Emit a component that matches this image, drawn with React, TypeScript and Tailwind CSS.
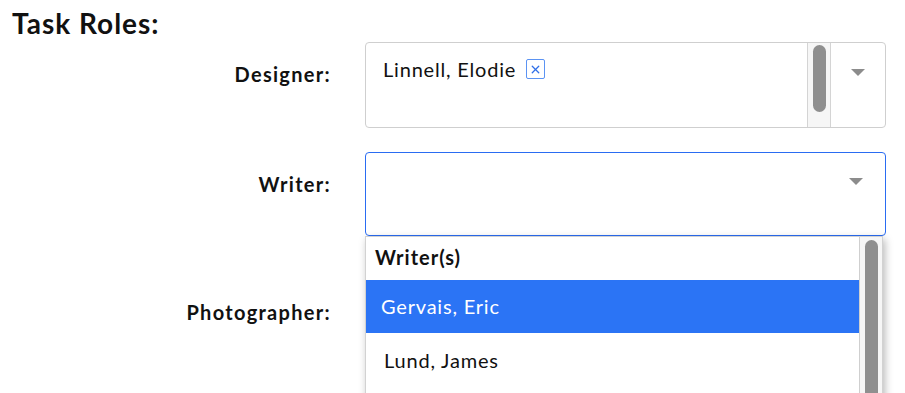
import { X } from "lucide-react";

const Caret = () => (
    <svg width="14" height="8" viewBox="0 0 14 8" className="block">
        <path d="M0 0 L14 0 L7 7 Z" fill="#8c8c8c" />
    </svg>
);

const App = () => {
    return (
        <div className="relative h-[393px] w-[905px] overflow-hidden bg-white font-['Lato',sans-serif] text-[#111]">
            <h1 className="pl-[12px] pt-[6px] text-[28px] leading-[34px] font-bold tracking-[1px]">Task Roles:</h1>

            <div className="mt-[2px] flex flex-col">
                {/* Designer */}
                <div className="flex">
                    <div className="w-[331px] pt-[19px] text-right text-[20px] leading-[26px] font-bold tracking-[1.3px]">Designer:</div>
                    <div className="ml-[34px] flex h-[86px] w-[521px] rounded-[4px] border border-[#cfcfcf]">
                        <div className="flex flex-1 items-start px-[17px] pt-[13px]">
                            <span className="text-[20px] leading-[26px] tracking-[0.8px]">Linnell, Elodie</span>
                            <span className="ml-[10px] mt-[3px] flex h-[20px] w-[19px] items-center justify-center rounded-[2px] border border-[#5b93f3] text-[#2f6fe8]">
                                <X size={13} strokeWidth={2.4} />
                            </span>
                        </div>
                        <div className="flex w-[24px] justify-center border-x border-[#d4d4d4] bg-[#f6f6f6] pt-[2px]">
                            <div className="h-[67px] w-[13px] rounded-full bg-[#8f8f8f]" />
                        </div>
                        <div className="flex w-[54px] justify-center pt-[26px]">
                            <Caret />
                        </div>
                    </div>
                </div>

                {/* Writer */}
                <div className="mt-[24px] flex">
                    <div className="w-[331px] pt-[19px] text-right text-[20px] leading-[26px] font-bold tracking-[1.3px]">Writer:</div>
                    <div className="relative ml-[34px] w-[521px]">
                        <div className="flex h-[84px] justify-end rounded-[4px] border-[1.5px] border-[#2a6cf2] pr-[22px] pt-[25px]">
                            <Caret />
                        </div>
                        <div className="absolute left-0 top-[84px] z-10 flex h-[170px] w-[518px] border border-[#d2d2d2] bg-white shadow-[2px_3px_8px_rgba(0,0,0,0.28)]">
                            <div className="flex flex-1 flex-col">
                                <div className="flex h-[43px] items-center pb-[4px] pl-[9px] text-[20px] font-bold tracking-[1px]">Writer(s)</div>
                                <div className="flex h-[53px] items-center bg-[#2b74f5] pb-[2px] pl-[15px] text-[20px] tracking-[0.8px] text-white">Gervais, Eric</div>
                                <div className="flex h-[55px] items-center pb-[2px] pl-[18px] text-[20px] tracking-[0.8px]">Lund, James</div>
                            </div>
                            <div className="flex w-[23px] justify-center border-l border-[#cfcfcf] bg-[#f6f6f6] pt-[3px]">
                                <div className="h-[200px] w-[13px] rounded-full bg-[#8f8f8f]" />
                            </div>
                        </div>
                    </div>
                </div>

                {/* Photographer */}
                <div className="mt-[45px] flex">
                    <div className="w-[331px] pt-[18px] text-right text-[20px] leading-[26px] font-bold tracking-[1.3px]">Photographer:</div>
                </div>
            </div>
        </div>
    );
};

export default App;
